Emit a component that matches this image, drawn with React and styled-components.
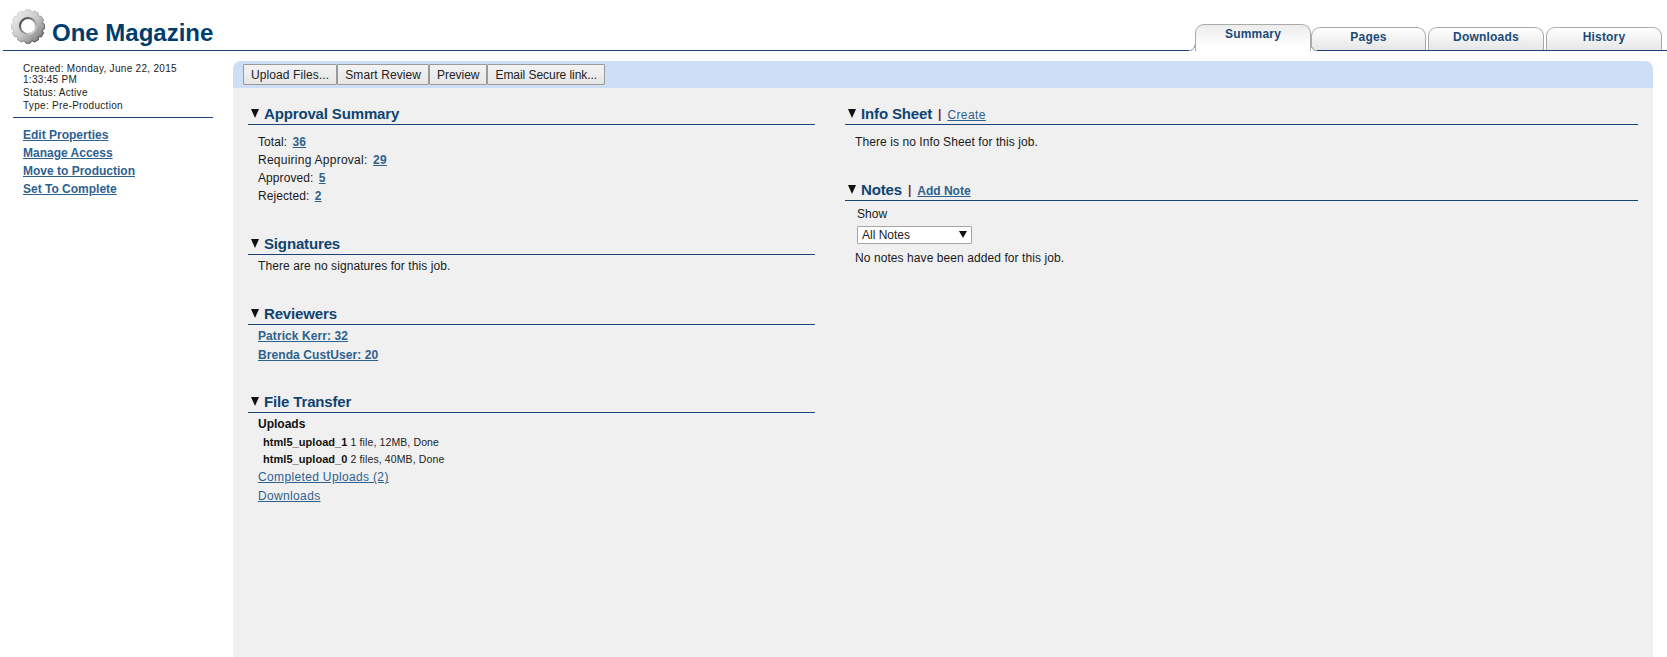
import React from 'react';
import styled, { createGlobalStyle } from 'styled-components';

const GlobalStyle = createGlobalStyle`
  html, body {
    margin: 0;
    padding: 0;
    height: 100%;
    background: #fff;
    overflow: hidden;
  }
  body {
    font-family: "Liberation Sans", Arial, sans-serif;
    font-size: 12px;
    color: #1a1a1a;
  }
`;

const Page = styled.div`
  height: 657px;
  display: flex;
  flex-direction: column;
`;

const Header = styled.header`
  height: 50px;
  margin-left: 3px;
  border-bottom: 1px solid #1b4379;
  display: flex;
  justify-content: space-between;
  align-items: flex-end;
  flex: none;
`;

const Brand = styled.div`
  display: flex;
  align-items: flex-start;
  height: 100%;
  padding: 9px 0 0 8px;
  box-sizing: border-box;
`;

const Title = styled.h1`
  margin: 10px 0 0 7px;
  font-size: 24px;
  line-height: 28px;
  font-weight: bold;
  color: #003d6e;
`;

const Tabs = styled.nav`
  display: flex;
  align-items: flex-end;
  margin-right: 5px;
`;

const Tab = styled.a`
  position: relative;
  box-sizing: border-box;
  width: ${(p) => p.$width}px;
  height: ${(p) => (p.$active ? 27 : 23)}px;
  margin-left: ${(p) => p.$gap || 0}px;
  margin-bottom: ${(p) => (p.$active ? -1 : 0)}px;
  border: 1px solid #aaa;
  border-bottom: 0;
  border-radius: 9px 9px 0 0;
  background: ${(p) =>
    p.$active
      ? 'linear-gradient(#ececec, #fff 85%)'
      : 'linear-gradient(#fff, #e6e6e6)'};
  color: #1b4a77;
  font-size: 12px;
  font-weight: bold;
  letter-spacing: 0.2px;
  line-height: ${(p) => (p.$active ? 19 : 19)}px;
  text-align: center;
  z-index: ${(p) => (p.$active ? 1 : 0)};

  ${(p) =>
    p.$active &&
    `
    &::before, &::after {
      content: '';
      position: absolute;
      bottom: 0;
      width: 6px;
      height: 6px;
    }
    &::before {
      left: -7px;
      background: radial-gradient(circle at 0 0, transparent 5px, #aaa 5.2px, #aaa 6px, #fff 6.4px);
    }
    &::after {
      right: -7px;
      background: radial-gradient(circle at 100% 0, transparent 5px, #aaa 5.2px, #aaa 6px, #fff 6.4px);
    }
  `}
`;

const Body = styled.div`
  flex: 1;
  display: flex;
  min-height: 0;
`;

const Sidebar = styled.aside`
  width: 200px;
  margin-left: 13px;
  margin-right: 20px;
  flex: none;
  padding-top: 12px;
`;

const Meta = styled.div`
  padding: 0 0 5px 10px;
  border-bottom: 1px solid #1b4379;
  font-size: 10px;
  letter-spacing: 0.3px;
  color: #222;
`;

const MetaLine = styled.div`
  line-height: ${(p) => p.$height || 13}px;
  margin-top: ${(p) => p.$top || 0}px;
  white-space: ${(p) => (p.$wrap ? 'normal' : 'nowrap')};
`;

const SideLinks = styled.div`
  padding: 8px 0 0 10px;
`;

const SideLink = styled.a`
  display: block;
  line-height: 18px;
  font-size: 12px;
  font-weight: bold;
  color: #2f618f;
  text-decoration: underline;
`;

const Panel = styled.main`
  width: 1420px;
  margin-top: 10px;
  flex: none;
  background: #f0f0f0;
  border-radius: 8px 8px 0 0;
  overflow: hidden;
`;

const Toolbar = styled.div`
  height: 27px;
  box-sizing: border-box;
  padding: 3px 0 0 10px;
  background: #cddef5;
  display: flex;
  align-items: flex-start;
`;

const ToolButton = styled.button`
  height: 21px;
  padding: 0 7px;
  border: 1px solid #9a9a9a;
  border-radius: 1px;
  background: linear-gradient(#f3f3f3, #e6e6e6);
  font-family: inherit;
  font-size: 12px;
  letter-spacing: ${(p) => (p.$tight ? '-0.05px' : '0.1px')};
  color: #222;
`;

const Columns = styled.div`
  display: grid;
  grid-template-columns: 567px 793px;
  column-gap: 30px;
  padding: 15px 0 0 15px;
`;

const Section = styled.section`
  margin-bottom: ${(p) => p.$spacing || 28}px;
`;

const SectionHead = styled.div`
  height: 21px;
  border-bottom: 1px solid #1b4379;
  display: flex;
  align-items: center;
  padding-left: 3px;
`;

const Arrow = styled.span`
  width: 0;
  height: 0;
  margin-right: 5px;
  border-left: 4px solid transparent;
  border-right: 4px solid transparent;
  border-top: 9px solid #111;
`;

const SectionTitle = styled.h2`
  margin: 0;
  font-size: 15px;
  line-height: 21px;
  font-weight: bold;
  letter-spacing: -0.15px;
  color: #0f4470;
`;

const Divider = styled.span`
  margin: 1px 6px 0 6px;
  font-size: 12px;
  font-weight: bold;
  color: #7a1f1f;
`;

const HeadLink = styled.a`
  margin-top: 2px;
  font-size: 12px;
  font-weight: ${(p) => (p.$bold ? 'bold' : 'normal')};
  letter-spacing: ${(p) => (p.$bold ? '0' : '0.4px')};
  color: #2f618f;
  text-decoration: underline;
`;

const SectionBody = styled.div`
  padding: ${(p) => p.$top || 0}px 0 0 10px;
`;

const Row = styled.div`
  line-height: ${(p) => p.$height || 18}px;
  padding-left: ${(p) => p.$indent || 0}px;
  letter-spacing: ${(p) => p.$tracking || 0.08}px;
`;

const CountLink = styled.a`
  margin-left: 2px;
  font-weight: bold;
  color: #2f618f;
  text-decoration: underline;
`;

const BoldLink = styled.a`
  font-weight: bold;
  color: #2f618f;
  text-decoration: underline;
`;

const PlainLink = styled.a`
  letter-spacing: 0.35px;
  color: #2f618f;
  text-decoration: underline;
`;

const StrongRow = styled.div`
  line-height: 19px;
  font-weight: bold;
  color: #111;
`;

const UploadRow = styled.div`
  padding-left: 5px;
  font-size: 10.5px;
  letter-spacing: 0.12px;
  line-height: 17px;
  color: #222;
`;

const UploadName = styled.b`
  font-size: 11px;
  color: #111;
  letter-spacing: 0.05px;
`;

const SelectWrap = styled.div`
  position: relative;
  width: 115px;
  height: 18px;
  margin: 3px 0 5px 2px;
  &::after {
    content: '';
    position: absolute;
    right: 5px;
    top: 5px;
    border-left: 4px solid transparent;
    border-right: 4px solid transparent;
    border-top: 7px solid #111;
  }
`;

const Select = styled.select`
  appearance: none;
  width: 100%;
  height: 100%;
  padding: 0 0 0 4px;
  box-sizing: border-box;
  border: 1px solid #a6a6a6;
  border-radius: 1px;
  background: #fff;
  font-family: inherit;
  font-size: 12px;
  color: #222;
`;

const gearPath = (() => {
  const teeth = 12;
  const cx = 17;
  const cy = 17;
  const pts = [];
  for (let i = 0; i < teeth; i++) {
    const a = (i / teeth) * Math.PI * 2;
    const step = (Math.PI * 2) / teeth;
    [
      [14.6, -0.5],
      [16.8, -0.25],
      [16.8, 0.25],
      [14.6, 0.5],
    ].forEach(([r, o]) => {
      const t = a + o * step;
      pts.push(`${(cx + r * Math.cos(t)).toFixed(2)} ${(cy + r * Math.sin(t)).toFixed(2)}`);
    });
  }
  return `M${pts.join('L')}Z`;
})();

const GearLogo = () => (
  <svg width="34" height="35" viewBox="0 0 34 34">
    <defs>
      <linearGradient id="gearFill" x1="0.1" y1="0.1" x2="0.9" y2="0.9">
        <stop offset="0" stopColor="#efefef" />
        <stop offset="0.55" stopColor="#c4c4c4" />
        <stop offset="1" stopColor="#7a7a7a" />
      </linearGradient>
      <linearGradient id="gearEdge" x1="0.1" y1="0.1" x2="0.9" y2="0.9">
        <stop offset="0" stopColor="#dcdcdc" />
        <stop offset="0.55" stopColor="#9a9a9a" />
        <stop offset="1" stopColor="#1c1c1c" />
      </linearGradient>
      <linearGradient id="gearHole" x1="0.1" y1="0.1" x2="0.9" y2="0.9">
        <stop offset="0" stopColor="#3c3c3c" />
        <stop offset="1" stopColor="#d8d8d8" />
      </linearGradient>
    </defs>
    <path d={gearPath} fill="url(#gearFill)" stroke="url(#gearEdge)" strokeWidth="0.9" strokeLinejoin="round" />
    <circle cx="17" cy="16.5" r="8" fill="#fff" stroke="url(#gearHole)" strokeWidth="2" />
  </svg>
);

export default function App() {
  return (
    <Page>
      <GlobalStyle />
      <Header>
        <Brand>
          <GearLogo />
          <Title>One Magazine</Title>
        </Brand>
        <Tabs>
          <Tab $active $width={116}>Summary</Tab>
          <Tab $width={115}>Pages</Tab>
          <Tab $width={116} $gap={2}>Downloads</Tab>
          <Tab $width={116} $gap={2}>History</Tab>
        </Tabs>
      </Header>
      <Body>
        <Sidebar>
          <Meta>
            <MetaLine $height={11} $wrap>Created: Monday, June 22, 2015<br />1:33:45 PM</MetaLine>
            <MetaLine $top={1}>Status: Active</MetaLine>
            <MetaLine>Type: Pre-Production</MetaLine>
          </Meta>
          <SideLinks>
            <SideLink>Edit Properties</SideLink>
            <SideLink>Manage Access</SideLink>
            <SideLink>Move to Production</SideLink>
            <SideLink>Set To Complete</SideLink>
          </SideLinks>
        </Sidebar>
        <Panel>
          <Toolbar>
            <ToolButton>Upload Files...</ToolButton>
            <ToolButton>Smart Review</ToolButton>
            <ToolButton $tight>Preview</ToolButton>
            <ToolButton $tight>Email Secure link...</ToolButton>
          </Toolbar>
          <Columns>
            <div>
              <Section>
                <SectionHead><Arrow /><SectionTitle>Approval Summary</SectionTitle></SectionHead>
                <SectionBody $top={8}>
                  <Row>Total: <CountLink>36</CountLink></Row>
                  <Row $tracking={0.25}>Requiring Approval: <CountLink>29</CountLink></Row>
                  <Row>Approved: <CountLink>5</CountLink></Row>
                  <Row>Rejected: <CountLink>2</CountLink></Row>
                </SectionBody>
              </Section>
              <Section>
                <SectionHead><Arrow /><SectionTitle>Signatures</SectionTitle></SectionHead>
                <SectionBody $top={2}>
                  <Row>There are no signatures for this job.</Row>
                </SectionBody>
              </Section>
              <Section $spacing={26}>
                <SectionHead><Arrow /><SectionTitle>Reviewers</SectionTitle></SectionHead>
                <SectionBody $top={2}>
                  <Row $height={19}><BoldLink>Patrick Kerr: 32</BoldLink></Row>
                  <Row $height={19}><BoldLink>Brenda CustUser: 20</BoldLink></Row>
                </SectionBody>
              </Section>
              <Section>
                <SectionHead><Arrow /><SectionTitle>File Transfer</SectionTitle></SectionHead>
                <SectionBody $top={2}>
                  <StrongRow>Uploads</StrongRow>
                  <UploadRow><UploadName>html5_upload_1</UploadName> 1 file, 12MB, Done</UploadRow>
                  <UploadRow><UploadName>html5_upload_0</UploadName> 2 files, 40MB, Done</UploadRow>
                  <Row $height={18}><PlainLink>Completed Uploads (2)</PlainLink></Row>
                  <Row $height={20}><PlainLink>Downloads</PlainLink></Row>
                </SectionBody>
              </Section>
            </div>
            <div>
              <Section>
                <SectionHead>
                  <Arrow /><SectionTitle>Info Sheet</SectionTitle><Divider>|</Divider><HeadLink>Create</HeadLink>
                </SectionHead>
                <SectionBody $top={8}>
                  <Row>There is no Info Sheet for this job.</Row>
                </SectionBody>
              </Section>
              <Section>
                <SectionHead>
                  <Arrow /><SectionTitle>Notes</SectionTitle><Divider>|</Divider><HeadLink $bold>Add Note</HeadLink>
                </SectionHead>
                <SectionBody $top={4}>
                  <Row $indent={2}>Show</Row>
                  <SelectWrap>
                    <Select defaultValue="all">
                      <option value="all">All Notes</option>
                    </Select>
                  </SelectWrap>
                  <Row>No notes have been added for this job.</Row>
                </SectionBody>
              </Section>
            </div>
          </Columns>
        </Panel>
      </Body>
    </Page>
  );
}
